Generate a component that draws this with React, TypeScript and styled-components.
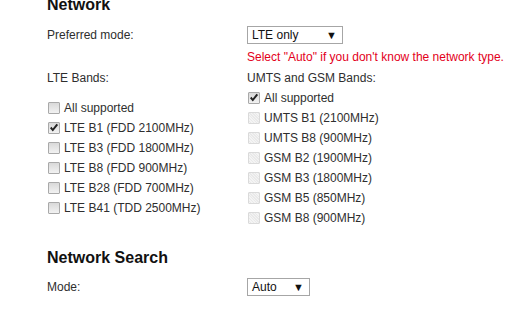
import styled, { createGlobalStyle } from 'styled-components';

const GlobalStyle = createGlobalStyle`
	html, body {
		margin: 0;
		padding: 0;
		background: #ffffff;
		overflow: hidden;
	}
	body {
		font-family: "Liberation Sans", Arial, sans-serif;
		font-size: 12px;
		color: #2e2e2e;
	}
`;

const lteBands = [
	{ label: 'LTE B1 (FDD 2100MHz)', checked: true },
	{ label: 'LTE B3 (FDD 1800MHz)', checked: false },
	{ label: 'LTE B8 (FDD 900MHz)', checked: false },
	{ label: 'LTE B28 (FDD 700MHz)', checked: false },
	{ label: 'LTE B41 (TDD 2500MHz)', checked: false },
];

const gsmBands = [
	'UMTS B1 (2100MHz)',
	'UMTS B8 (900MHz)',
	'GSM B2 (1900MHz)',
	'GSM B3 (1800MHz)',
	'GSM B5 (850MHz)',
	'GSM B8 (900MHz)',
];

const Tick = () => (
	<svg width="10" height="10" viewBox="0 0 10 10">
		<path d="M1 5.3 L3.8 8.4 L9.1 1.9 L7.5 0.8 L3.8 5.5 L2.4 3.8 Z" fill="#222222" />
	</svg>
);

const CheckItem = ({ label, checked, disabled }: { label: string; checked?: boolean; disabled?: boolean }) => (
	<Item>
		<Box $disabled={disabled}>{checked && <Tick />}</Box>
		<span>{label}</span>
	</Item>
);

const App = () => {
	return (
		<>
			<GlobalStyle />
			<Page>
				<Heading>Network</Heading>
				<Row $top={10}>
					<Label>Preferred mode:</Label>
					<Select $width={96}>
						<span>LTE only</span>
						<Arrow>▼</Arrow>
					</Select>
				</Row>
				<Row $top={2}>
					<Label />
					<Hint>Select "Auto" if you don't know the network type.</Hint>
				</Row>
				<Row $top={2} $align="start">
					<Column>
						<GroupLabel>LTE Bands:</GroupLabel>
						<List $top={10}>
							<CheckItem label="All supported" />
							{lteBands.map((b) => (
								<CheckItem key={b.label} label={b.label} checked={b.checked} />
							))}
						</List>
					</Column>
					<Column>
						<GroupLabel>UMTS and GSM Bands:</GroupLabel>
						<List $top={0}>
							<CheckItem label="All supported" checked />
							{gsmBands.map((b) => (
								<CheckItem key={b} label={b} disabled />
							))}
						</List>
					</Column>
				</Row>
				<Heading $top={20}>Network Search</Heading>
				<Row $top={9}>
					<Label>Mode:</Label>
					<Select $width={63}>
						<span>Auto</span>
						<Arrow>▼</Arrow>
					</Select>
				</Row>
			</Page>
		</>
	);
};

const Page = styled.div`
	margin-top: -5px;
	padding-left: 47px;
	width: 462px;
`;

const Heading = styled.h2<{ $top?: number }>`
	margin: ${(p) => p.$top ?? 0}px 0 0;
	font-size: 16px;
	line-height: 20px;
	font-weight: bold;
	color: #111111;
`;

const Row = styled.div<{ $top: number; $align?: string }>`
	display: grid;
	grid-template-columns: 200px 1fr;
	align-items: ${(p) => p.$align ?? 'center'};
	margin-top: ${(p) => p.$top}px;
	min-height: 20px;
`;

const Label = styled.div`
	line-height: 20px;
`;

const Select = styled.div<{ $width: number }>`
	display: flex;
	align-items: center;
	justify-content: space-between;
	box-sizing: border-box;
	width: ${(p) => p.$width}px;
	height: 18px;
	padding: 0 5px 0 4px;
	border: 1px solid #a6a6a6;
	background: #ffffff;
	color: #111111;
	font-size: 12px;
`;

const Arrow = styled.span`
	font-size: 11px;
	line-height: 1;
	color: #111111;
`;

const Hint = styled.div`
	color: #e3001b;
	line-height: 20px;
	white-space: nowrap;
`;

const Column = styled.div`
	display: flex;
	flex-direction: column;
`;

const GroupLabel = styled.div`
	line-height: 19px;
`;

const List = styled.div<{ $top: number }>`
	display: flex;
	flex-direction: column;
	margin-top: ${(p) => p.$top}px;
`;

const Item = styled.div`
	display: flex;
	align-items: center;
	gap: 4px;
	height: 20px;
`;

const Box = styled.span<{ $disabled?: boolean }>`
	display: inline-flex;
	align-items: center;
	justify-content: center;
	box-sizing: border-box;
	width: 12px;
	height: 12px;
	margin-left: 1px;
	border: 1px solid ${(p) => (p.$disabled ? '#dadada' : '#a9a9a9')};
	border-radius: 1px;
	background: ${(p) =>
		p.$disabled
			? 'repeating-linear-gradient(45deg, #f4f4f4 0 1px, #e9e9e9 1px 2px)'
			: 'linear-gradient(#d9d9d9, #f2f2f2)'};
`;

export default App;
